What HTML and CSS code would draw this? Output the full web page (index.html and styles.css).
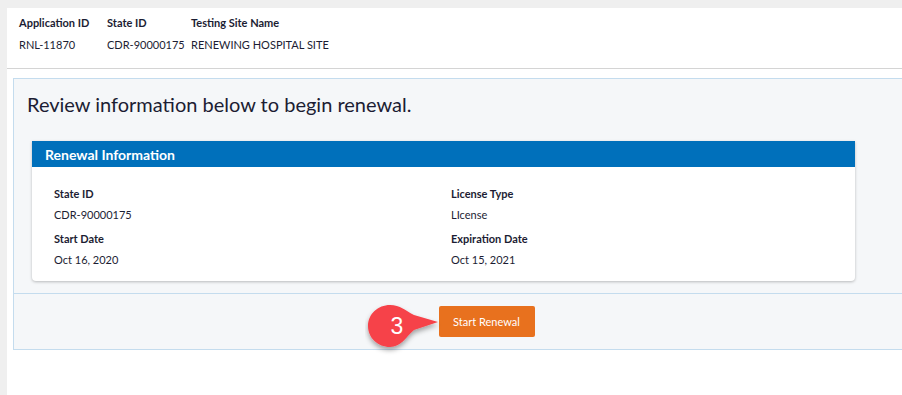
FILE: index.html
```html
<!DOCTYPE html>
<html lang="en">
<head>
  <meta charset="UTF-8">
  <meta name="viewport" content="width=device-width, initial-scale=1.0">
  <title>Start Renewal</title>
  <link rel="stylesheet" href="styles.css">
</head>
<body>
  <div class="page">
    <div class="summary">
      <div class="summary-col col-app">
        <div class="label">Application ID</div>
        <div class="value">RNL-11870</div>
      </div>
      <div class="summary-col col-state">
        <div class="label">State ID</div>
        <div class="value">CDR-90000175</div>
      </div>
      <div class="summary-col">
        <div class="label">Testing Site Name</div>
        <div class="value">RENEWING HOSPITAL SITE</div>
      </div>
    </div>

    <div class="panel">
      <div class="panel-body">
        <h1>Review information below to begin renewal.</h1>
        <div class="card">
          <div class="card-header">Renewal Information</div>
          <div class="card-grid">
            <div class="field">
              <div class="label">State ID</div>
              <div class="value">CDR-90000175</div>
            </div>
            <div class="field">
              <div class="label">License Type</div>
              <div class="value">LIcense</div>
            </div>
            <div class="field">
              <div class="label">Start Date</div>
              <div class="value">Oct 16, 2020</div>
            </div>
            <div class="field">
              <div class="label">Expiration Date</div>
              <div class="value">Oct 15, 2021</div>
            </div>
          </div>
        </div>
      </div>
      <div class="panel-footer">
        <div class="button-wrap">
          <svg class="step-badge" width="82" height="62" viewBox="0 0 82 62">
            <defs>
              <filter id="badgeShadow" x="-30%" y="-30%" width="160%" height="170%">
                <feDropShadow dx="0" dy="3" stdDeviation="2.5" flood-color="#000" flood-opacity="0.35"/>
              </filter>
            </defs>
            <path d="M25 6 C35 6 41 12 49 16 L73 23 L49 31 C41 38 36 48 25 48 C13 48 3 39 3 27 C3 15 13 6 25 6 Z" fill="#f6424a" filter="url(#badgeShadow)"/>
            <text x="32" y="35" text-anchor="middle" class="badge-num">3</text>
          </svg>
          <button class="start-button">Start Renewal</button>
        </div>
      </div>
    </div>
  </div>
</body>
</html>
```

FILE: styles.css
```css
body { margin: 0; background: #efefef; font-family: "Lato", "Liberation Sans", sans-serif; color: #1c1d33; }
.page { margin: 8px 0 0 7px; background: #fff; height: 387px; overflow: hidden; }

.summary {
  display: flex; height: 61px; box-sizing: border-box;
  padding: 8px 0 0 12px; border-bottom: 1px solid #d4d4d4;
}
.summary-col .label { font-size: 11px; font-weight: bold; line-height: 14px; }
.summary-col .value { font-size: 11px; line-height: 14px; margin-top: 8px; }
.col-app { width: 88px; }
.col-state { width: 84px; }

.panel {
  margin: 9px 0 0 6px;
  background: #f5f7f9;
  border: 1px solid #c4dcee; border-right: none;
}
.panel-body { padding: 12px 0 12px 13px; }
h1 { font-size: 20px; font-weight: normal; margin: 0 0 24px; line-height: 26px; color: #1c1d33; }

.card {
  width: 823px; margin-left: 5px;
  background: #fff; border-radius: 0 0 4px 4px;
  box-shadow: 0 1px 3px rgba(0,0,0,0.25);
}
.card-header {
  background: #0070bb; color: #fff; font-weight: bold;
  font-size: 14px; height: 26px; line-height: 27px; padding-left: 13px;
}
.card-grid {
  display: grid; grid-template-columns: 397px 1fr;
  padding: 20px 0 14px 22px; row-gap: 10px;
}
.field .label { font-size: 11px; font-weight: bold; line-height: 14px; }
.field .value { font-size: 11px; line-height: 14px; margin-top: 7px; }

.panel-footer {
  border-top: 1px solid #c4dcee; height: 55px;
  display: flex; justify-content: center; align-items: center;
}
.button-wrap { position: relative; margin-left: 57px; }
.start-button {
  display: block;
  background: #e8711e; color: #fff; border: none; border-radius: 2px;
  font-family: "Lato", "Liberation Sans", sans-serif; font-size: 11px;
  width: 96px; height: 31px; padding: 0;
}
.step-badge { position: absolute; left: -74px; top: -7px; }
.badge-num { fill: #fff; font-family: "Liberation Sans", Arial, sans-serif; font-size: 23px; }
```
